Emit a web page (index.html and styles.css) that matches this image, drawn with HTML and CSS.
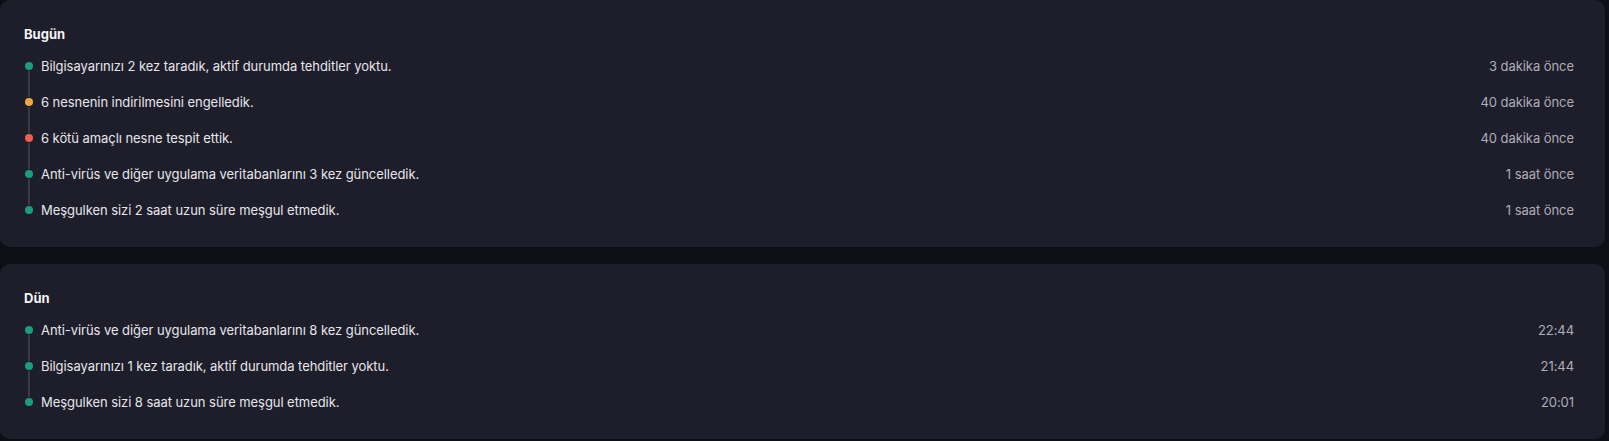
FILE: index.html
```html
<!DOCTYPE html>
<html lang="tr">
<head>
<meta charset="utf-8">
<title>Etkinlik</title>
<link rel="stylesheet" href="styles.css">
</head>
<body>
<div class="page">
  <section class="card">
    <h2 class="day">Bugün</h2>
    <ul class="events">
      <li class="event first">
        <span class="marker"><span class="seg"></span><span class="dot ok"></span><span class="seg"></span></span>
        <span class="text">Bilgisayarınızı 2 kez taradık, aktif durumda tehditler yoktu.</span>
        <span class="time">3 dakika önce</span>
      </li>
      <li class="event">
        <span class="marker"><span class="seg"></span><span class="dot warn"></span><span class="seg"></span></span>
        <span class="text">6 nesnenin indirilmesini engelledik.</span>
        <span class="time">40 dakika önce</span>
      </li>
      <li class="event">
        <span class="marker"><span class="seg"></span><span class="dot bad"></span><span class="seg"></span></span>
        <span class="text">6 kötü amaçlı nesne tespit ettik.</span>
        <span class="time">40 dakika önce</span>
      </li>
      <li class="event">
        <span class="marker"><span class="seg"></span><span class="dot ok"></span><span class="seg"></span></span>
        <span class="text">Anti-virüs ve diğer uygulama veritabanlarını 3 kez güncelledik.</span>
        <span class="time">1 saat önce</span>
      </li>
      <li class="event last">
        <span class="marker"><span class="seg"></span><span class="dot ok"></span><span class="seg"></span></span>
        <span class="text">Meşgulken sizi 2 saat uzun süre meşgul etmedik.</span>
        <span class="time">1 saat önce</span>
      </li>
    </ul>
  </section>
  <section class="card">
    <h2 class="day">Dün</h2>
    <ul class="events">
      <li class="event first">
        <span class="marker"><span class="seg"></span><span class="dot ok"></span><span class="seg"></span></span>
        <span class="text">Anti-virüs ve diğer uygulama veritabanlarını 8 kez güncelledik.</span>
        <span class="time">22:44</span>
      </li>
      <li class="event">
        <span class="marker"><span class="seg"></span><span class="dot ok"></span><span class="seg"></span></span>
        <span class="text">Bilgisayarınızı 1 kez taradık, aktif durumda tehditler yoktu.</span>
        <span class="time">21:44</span>
      </li>
      <li class="event last">
        <span class="marker"><span class="seg"></span><span class="dot ok"></span><span class="seg"></span></span>
        <span class="text">Meşgulken sizi 8 saat uzun süre meşgul etmedik.</span>
        <span class="time">20:01</span>
      </li>
    </ul>
  </section>
</div>
</body>
</html>
```

FILE: styles.css
```css
html, body {
  margin: 0;
  padding: 0;
  background: #0e0e17;
}
body {
  font-family: Inter, "Noto Sans", sans-serif;
  color: #e6e6ea;
  width: 1609px;
  height: 441px;
  overflow: hidden;
}
.page {
  display: flex;
  flex-direction: column;
  gap: 17px;
  padding-right: 4px;
}
.card {
  background: #1e1d2a;
  border-radius: 10px;
  padding: 26px 31px 19px 24px;
}
.day {
  margin: 0;
  font-size: 13px;
  line-height: 16px;
  font-weight: 700;
  color: #f4f4f6;
}
.events {
  list-style: none;
  margin: 6px 0 0 0;
  padding: 0;
  display: flex;
  flex-direction: column;
}
.event {
  display: flex;
  align-items: center;
  height: 36px;
  font-size: 13px;
  letter-spacing: -0.06px;
}
.marker {
  width: 10px;
  height: 100%;
  display: flex;
  flex-direction: column;
  align-items: center;
  gap: 1px;
  flex: none;
}
.seg {
  flex: 1;
  width: 2px;
  background: #3b3a4c;
}
.first .seg:first-child,
.last .seg:last-child {
  background: transparent;
}
.dot {
  width: 8px;
  height: 8px;
  border-radius: 50%;
  flex: none;
}
.dot.ok { background: #1b9d7d; }
.dot.warn { background: #f4a73e; }
.dot.bad { background: #ef5f50; }
.text {
  margin-left: 7px;
  flex: 1;
  color: #e6e6ea;
}
.time {
  color: #aeaeb8;
}
```
